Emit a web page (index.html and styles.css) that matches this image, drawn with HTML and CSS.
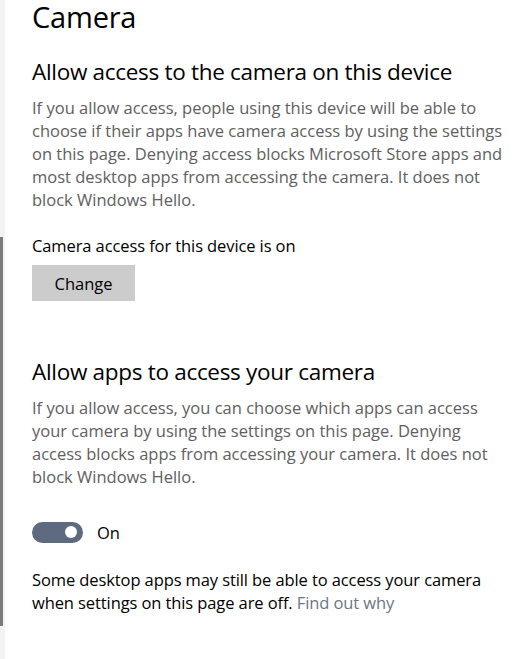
FILE: index.html
```html
<!DOCTYPE html>
<html>
<head>
<meta charset="utf-8">
<link rel="stylesheet" href="styles.css">
</head>
<body>
<div class="page">
  <div class="edge"><div class="edge-bar"></div></div>
  <main class="content">
    <h1 class="title">Camera</h1>
    <h2 class="section-title first">Allow access to the camera on this device</h2>
    <p class="desc">If you allow access, people using this device will be able to choose if their apps have camera access by using the settings on this page. Denying access blocks Microsoft Store apps and most desktop apps from accessing the camera. It does not block Windows Hello.</p>
    <p class="status">Camera access for this device is on</p>
    <button class="btn">Change</button>
    <h2 class="section-title second">Allow apps to access your camera</h2>
    <p class="desc">If you allow access, you can choose which apps can access your camera by using the settings on this page. Denying access blocks apps from accessing your camera. It does not block Windows Hello.</p>
    <div class="toggle-row">
      <span class="toggle"><span class="knob"></span></span>
      <span class="toggle-label">On</span>
    </div>
    <p class="note">Some desktop apps may still be able to access your camera when settings on this page are off. <a class="link" href="#">Find out why</a></p>
  </main>
</div>
</body>
</html>
```

FILE: styles.css
```css
html, body {
  margin: 0;
  padding: 0;
  background: #ffffff;
}
body {
  font-family: "Open Sans", "Noto Sans", "Liberation Sans", sans-serif;
  color: #000000;
  width: 524px;
  height: 659px;
  overflow: hidden;
}
.page {
  display: flex;
  height: 659px;
}
.edge {
  width: 5px;
  flex: none;
  background: #f3f3f3;
}
.edge-bar {
  margin-top: 237px;
  width: 3px;
  height: 389px;
  background: #7b7b7b;
}
.content {
  padding-left: 27px;
  padding-right: 18px;
  flex: 1;
}
.title {
  margin: 0;
  font-size: 29px;
  font-weight: 400;
  line-height: 34px;
  letter-spacing: -0.2px;
}
.section-title {
  margin: 0;
  font-size: 22.5px;
  font-weight: 400;
  line-height: 30px;
  letter-spacing: -0.3px;
}
.section-title.first {
  margin-top: 23px;
}
.section-title.second {
  margin-top: 56px;
}
.desc {
  margin: 8.5px 0 0 0;
  font-size: 16.5px;
  line-height: 23px;
  color: #606060;
}
.status {
  margin: 23px 0 0 0;
  font-size: 16.5px;
  line-height: 23px;
  letter-spacing: -0.1px;
}
.btn {
  display: block;
  margin-top: 8.5px;
  width: 103px;
  height: 36px;
  border: none;
  background: #cccccc;
  font-family: inherit;
  font-size: 16.5px;
  color: #000000;
  padding: 0;
}
.toggle-row {
  display: flex;
  align-items: center;
  margin-top: 33.5px;
  height: 22px;
}
.toggle {
  width: 51px;
  height: 21px;
  border-radius: 11px;
  background: #5d6a80;
  display: flex;
  align-items: center;
  justify-content: flex-end;
  padding-right: 6px;
  box-sizing: border-box;
}
.knob {
  width: 12px;
  height: 12px;
  border-radius: 50%;
  background: #ffffff;
}
.toggle-label {
  margin-left: 14px;
  font-size: 16.5px;
  line-height: 22px;
  padding-top: 1px;
}
.note {
  margin: 24.5px 0 0 0;
  font-size: 16.5px;
  line-height: 23px;
  letter-spacing: -0.1px;
}
.link {
  color: #6b7687;
  text-decoration: none;
}
```
